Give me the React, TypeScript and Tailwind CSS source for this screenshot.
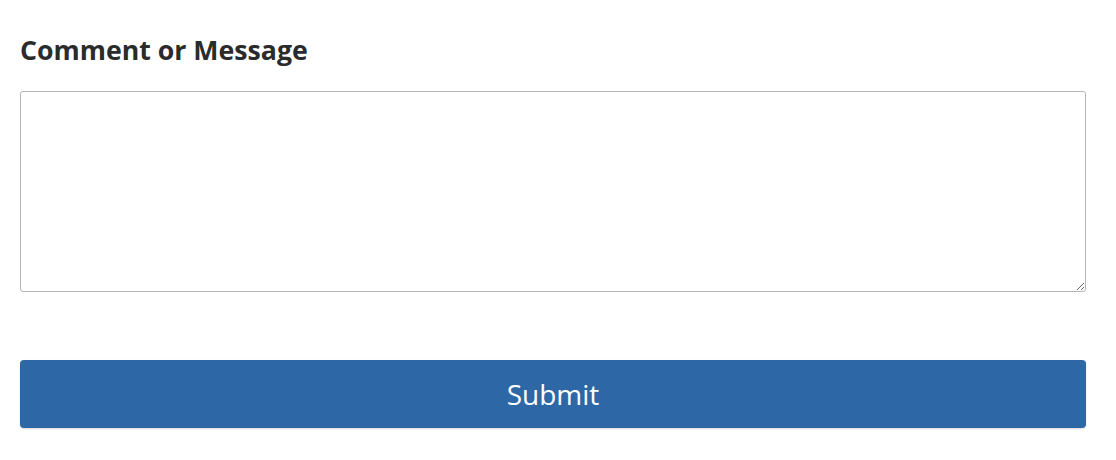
export default function App() {
  return (
    <div className="min-h-screen bg-white px-5 pt-[31px] font-['Open_Sans',sans-serif]">
      <form className="w-[1066px]" onSubmit={(e) => e.preventDefault()}>
        <label htmlFor="msg" className="block text-[26.7px] leading-[38px] font-bold text-[#2b2b2b]">
          Comment or Message
        </label>
        <textarea
          id="msg"
          className="mt-[22px] block h-[201px] w-full rounded-[3px] border border-[#b5b5b5] bg-white p-2 text-base outline-none"
        />
        <button
          type="submit"
          className="mt-[68px] flex h-[68px] w-full items-center justify-center rounded-[4px] bg-[#2e67a6] text-[28px] text-white shadow-[0_1px_2px_rgba(0,0,0,0.15)]"
        >
          Submit
        </button>
      </form>
    </div>
  );
}
